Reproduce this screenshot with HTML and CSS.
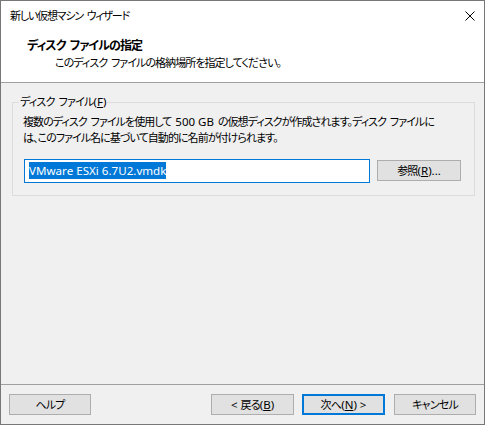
FILE: index.html
```html
<!DOCTYPE html>
<html lang="ja">
<head>
  <meta charset="UTF-8">
  <title>新しい仮想マシン ウィザード</title>
  <link rel="stylesheet" href="styles.css">
</head>
<body>
  <div class="window">
    <div class="titlebar">
      <span class="title">新しい仮想マシン ウィザード</span>
      <svg class="close" width="10" height="10" viewBox="0 0 10 10">
        <path d="M0.5 0.5L9.5 9.5M9.5 0.5L0.5 9.5" stroke="#000" stroke-width="1"/>
      </svg>
    </div>

    <div class="header">
      <div class="header-title">ディスク ファイルの指定</div>
      <div class="header-sub">このディスク ファイルの格納場所を指定してください。</div>
    </div>

    <div class="content">
      <fieldset class="group">
        <legend>ディスク ファイル<span class="latin">(<u>F</u>)</span></legend>
        <div class="group-body">
          <p class="desc">複数のディスク ファイルを使用して <span class="latin">500 GB</span> の仮想ディスクが作成されます。ディスク ファイルに<br>は、このファイル名に基づいて自動的に名前が付けられます。</p>
          <div class="path-row">
            <div class="path-box"><span class="selected">VMware ESXi 6.7U2.vmdk</span></div>
            <button class="btn browse">参照<span class="latin">(<u>R</u>)...</span></button>
          </div>
        </div>
      </fieldset>
    </div>

    <div class="footer">
      <button class="btn">ヘルプ</button>
      <button class="btn back"><span class="latin">&lt; </span>戻る<span class="latin">(<u>B</u>)</span></button>
      <button class="btn default">次へ<span class="latin">(<u>N</u>) &gt;</span></button>
      <button class="btn cancel">キャンセル</button>
    </div>
  </div>
</body>
</html>
```

FILE: styles.css
```css
* {
  box-sizing: border-box;
}

body {
  margin: 0;
  font-family: "Noto Sans", "Noto Sans CJK JP", sans-serif;
  font-size: 11px;
  letter-spacing: -0.8px;
  word-spacing: 2px;
  font-feature-settings: "palt";
  color: #000;
}

.window {
  width: 485px;
  height: 425px;
  border: 1px solid #777777;
  background: #f0f0f0;
  display: flex;
  flex-direction: column;
}

.titlebar {
  height: 29px;
  background: #fff;
  display: flex;
  align-items: center;
  justify-content: space-between;
  padding: 0 9px 0 9px;
}

.title {
  line-height: 16px;
  margin-top: 1px;
  letter-spacing: -1.2px;
}

.close {
  display: block;
}

.header {
  height: 53px;
  background: #fff;
  border-bottom: 1px solid #a0a0a0;
  padding: 8px 0 0 26px;
}

.header-title {
  font-size: 12px;
  font-weight: bold;
  letter-spacing: -0.9px;
  line-height: 16px;
}

.header-sub {
  line-height: 16px;
  margin-top: 1px;
  padding-left: 28px;
  letter-spacing: -0.95px;
}

.content {
  flex: 1;
  padding: 11px 9px 0 11px;
}

.group {
  margin: 0;
  padding: 0;
  border: 1px solid #dcdcdc;
  min-width: 0;
}

.group legend {
  margin-left: 6px;
  padding: 0 1px;
  line-height: 16px;
}

.group-body {
  padding: 4px 10px 12px 10px;
}

.desc {
  margin: 0;
  line-height: 16px;
  white-space: nowrap;
  letter-spacing: -0.95px;
}

.latin {
  font-size: 11.5px;
  letter-spacing: 0;
  word-spacing: 0;
}

.path-row {
  display: flex;
  align-items: flex-start;
  gap: 7px;
  margin-top: 13px;
  padding-left: 1px;
}

.path-box {
  width: 346px;
  height: 24px;
  background: #fff;
  border: 1px solid #0078d7;
  padding: 2px 4px;
  line-height: 18px;
}

.selected {
  font-size: 11.6px;
  letter-spacing: 0;
  word-spacing: 0;
  background: #0078d7;
  color: #fff;
  display: inline-block;
  line-height: 17px;
}

.btn {
  font: inherit;
  letter-spacing: -0.8px;
  font-feature-settings: "palt";
  height: 21px;
  width: 82px;
  padding: 0;
  background: #e1e1e1;
  border: 1px solid #adadad;
  color: #000;
  line-height: 17px;
}

.browse {
  width: 84px;
  margin-top: 1px;
}

.footer {
  border-top: 1px solid #a0a0a0;
  height: 40px;
  display: flex;
  align-items: flex-start;
  padding: 9px 8px 0 8px;
}

.back {
  margin-left: auto;
  width: 83px;
}

.default {
  width: 83px;
  margin-left: 8px;
  border: 2px solid #0078d7;
}

.cancel {
  margin-left: 9px;
}
```
